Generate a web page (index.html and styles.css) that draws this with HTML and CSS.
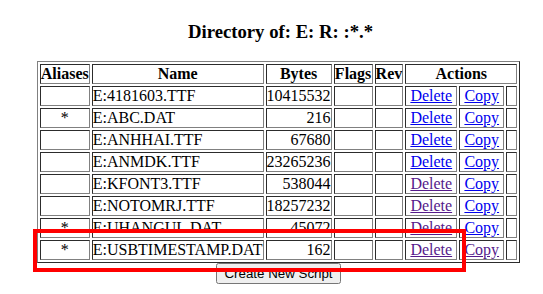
FILE: index.html
```html
<!DOCTYPE html>
<html>
<head>
<meta charset="utf-8">
<link rel="stylesheet" href="styles.css">
</head>
<body>
<div class="page">
  <h3 class="title">Directory of: E: R: :*.*</h3>
  <table class="dir">
    <tr>
      <th class="c-alias">Aliases</th>
      <th class="c-name">Name</th>
      <th class="c-bytes">Bytes</th>
      <th class="c-flags">Flags</th>
      <th class="c-rev">Rev</th>
      <th colspan="3">Actions</th>
    </tr>
    <tr>
      <td class="c-alias"></td><td class="c-name">E:4181603.TTF</td><td class="c-bytes">10415532</td><td class="c-flags"></td><td class="c-rev"></td>
      <td class="c-del"><a href="#">Delete</a></td><td class="c-copy"><a href="#">Copy</a></td><td class="c-last"></td>
    </tr>
    <tr>
      <td class="c-alias">*</td><td class="c-name">E:ABC.DAT</td><td class="c-bytes">216</td><td class="c-flags"></td><td class="c-rev"></td>
      <td class="c-del"><a href="#">Delete</a></td><td class="c-copy"><a href="#">Copy</a></td><td class="c-last"></td>
    </tr>
    <tr>
      <td class="c-alias"></td><td class="c-name">E:ANHHAI.TTF</td><td class="c-bytes">67680</td><td class="c-flags"></td><td class="c-rev"></td>
      <td class="c-del"><a href="#">Delete</a></td><td class="c-copy"><a href="#">Copy</a></td><td class="c-last"></td>
    </tr>
    <tr>
      <td class="c-alias"></td><td class="c-name">E:ANMDK.TTF</td><td class="c-bytes">23265236</td><td class="c-flags"></td><td class="c-rev"></td>
      <td class="c-del"><a href="#">Delete</a></td><td class="c-copy"><a href="#">Copy</a></td><td class="c-last"></td>
    </tr>
    <tr>
      <td class="c-alias"></td><td class="c-name">E:KFONT3.TTF</td><td class="c-bytes">538044</td><td class="c-flags"></td><td class="c-rev"></td>
      <td class="c-del"><a href="#" class="visited">Delete</a></td><td class="c-copy"><a href="#">Copy</a></td><td class="c-last"></td>
    </tr>
    <tr>
      <td class="c-alias"></td><td class="c-name">E:NOTOMRJ.TTF</td><td class="c-bytes">18257232</td><td class="c-flags"></td><td class="c-rev"></td>
      <td class="c-del"><a href="#" class="visited">Delete</a></td><td class="c-copy"><a href="#">Copy</a></td><td class="c-last"></td>
    </tr>
    <tr>
      <td class="c-alias">*</td><td class="c-name">E:UHANGUL.DAT</td><td class="c-bytes">45072</td><td class="c-flags"></td><td class="c-rev"></td>
      <td class="c-del"><a href="#" class="visited">Delete</a></td><td class="c-copy"><a href="#">Copy</a></td><td class="c-last"></td>
    </tr>
    <tr>
      <td class="c-alias">*</td><td class="c-name">E:USBTIMESTAMP.DAT</td><td class="c-bytes">162</td><td class="c-flags"></td><td class="c-rev"></td>
      <td class="c-del"><a href="#" class="visited">Delete</a></td><td class="c-copy"><a href="#" class="visited">Copy</a></td><td class="c-last"></td>
    </tr>
  </table>
  <div class="actions">
    <button type="button" class="btn">Create New Script</button>
  </div>
</div>
<div class="highlight"></div>
</body>
</html>
```

FILE: styles.css
```css
html, body {
  margin: 0;
  padding: 0;
  background: #ffffff;
}

body {
  font-family: "Liberation Serif", "Times New Roman", serif;
  font-size: 16px;
  color: #000000;
}

.page {
  padding-left: 14px;
}

.title {
  margin: 21px 0 19px;
  padding-left: 4px;
  font-size: 18.72px;
  line-height: 21px;
  font-weight: bold;
  text-align: center;
}

.dir {
  margin: 0 auto;
  border: 1px outset #808080;
  border-spacing: 2px;
}

.dir th,
.dir td {
  border: 1px inset #808080;
  padding: 0;
  line-height: 18px;
  height: 18px;
}

.dir th {
  font-weight: bold;
  text-align: center;
}

.dir a {
  color: #0000ee;
  text-decoration: underline;
}

.dir a.visited {
  color: #551a8b;
}

.c-alias { width: 48px; text-align: center; }
.c-name { text-align: left; }
.c-bytes { width: 64px; text-align: right; }
.c-flags { width: 37px; }
.c-rev { width: 26px; }
.c-del { width: 50px; text-align: center; }
.c-copy { width: 43px; text-align: center; }
.c-last { width: 9px; }

.dir th.c-name,
.dir th.c-bytes {
  text-align: center;
}

.actions {
  text-align: center;
}

.btn {
  font-family: "Liberation Sans", Arial, sans-serif;
  font-size: 13.333px;
}

.highlight {
  position: absolute;
  left: 33px;
  top: 229px;
  width: 433px;
  height: 43px;
  box-sizing: border-box;
  border: 4px solid #ff0000;
  pointer-events: none;
}
```
